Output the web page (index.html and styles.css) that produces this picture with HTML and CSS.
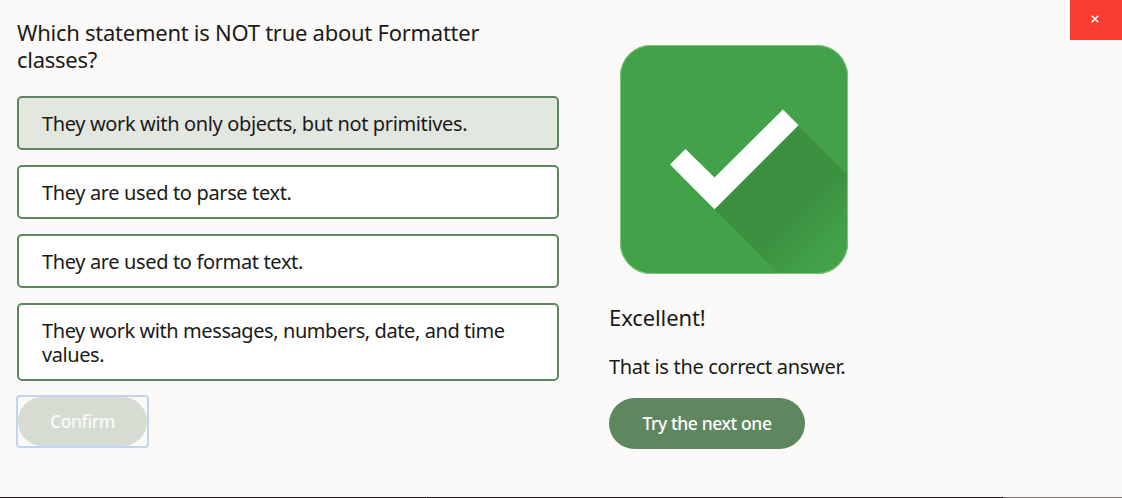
FILE: index.html
```html
<!DOCTYPE html>
<html lang="en">
<head>
<meta charset="utf-8">
<title>Quiz</title>
<link rel="stylesheet" href="styles.css">
</head>
<body>
<div class="dialog">
  <main class="quiz">
    <section class="question">
      <h1 class="prompt">Which statement is NOT true about Formatter<br>classes?</h1>
      <div class="options">
        <div class="option selected">They work with only objects, but not primitives.</div>
        <div class="option">They are used to parse text.</div>
        <div class="option">They are used to format text.</div>
        <div class="option long">They work with messages, numbers, date, and time<br>values.</div>
      </div>
      <div class="focus"><button class="button confirm" disabled>Confirm</button></div>
    </section>
    <section class="feedback">
      <svg class="badge" width="228" height="229" viewBox="0 0 228 229">
        <defs>
          <linearGradient id="shade" gradientUnits="userSpaceOnUse" x1="155" y1="155" x2="209" y2="209">
            <stop offset="0" stop-color="#3c9141"/>
            <stop offset="0.35" stop-color="#3c9141"/>
            <stop offset="1" stop-color="#43a249"/>
          </linearGradient>
          <clipPath id="tile"><rect width="228" height="229" rx="31"/></clipPath>
        </defs>
        <g clip-path="url(#tile)">
          <rect width="228" height="229" fill="#43a249"/>
          <path d="M178.500 80.500L328.500 230.500L244.500 314.500L94.500 164.500Z" fill="url(#shade)"/>
          <path d="M50 119.500L65.500 104L94.500 132.500L163 64.500L178.500 80.200L94.500 164.200Z" fill="#fff"/>
        </g>
        <rect x=".5" y=".5" width="227" height="228" rx="30.500" fill="none" stroke="#7cc680"/>
      </svg>
      <h2 class="result">Excellent!</h2>
      <p class="detail">That is the correct answer.</p>
      <button class="button next">Try the next one</button>
    </section>
    <button class="close" aria-label="Close">
      <svg width="8" height="8" viewBox="0 0 8 8"><path d="M.7.7L7.300 7.300M7.300.7L.7 7.300" stroke="#fff" stroke-width="1.500"/></svg>
    </button>
  </main>
  <footer class="edge"><i class="dark"></i><i class="tick"></i><i class="dark grow"></i><i class="light"></i></footer>
</div>
</body>
</html>
```
FILE: styles.css
```css
* { box-sizing: border-box; }
body { margin: 0; background: #fbfaf8; color: #1b1a18; font-family: "Noto Sans", sans-serif; }
h1, h2, p { margin: 0; font-weight: 400; }
.dialog { height: 498px; display: flex; flex-direction: column; overflow: hidden; }
.quiz { flex: 1; min-height: 0; display: flex; align-items: flex-start; }
.question { width: 542px; margin-left: 17px; padding-top: 19px; }
.prompt { font-size: 22px; line-height: 27px; letter-spacing: -0.26px; white-space: nowrap; }
.options { display: grid; gap: 15px; margin-top: 23px; }
.option { border: 2px solid #5f875f; border-radius: 5px; background: #fff; padding: 14px 23px 12px; font-size: 20px; line-height: 24px; letter-spacing: -0.36px; white-space: nowrap; }
.long { letter-spacing: -0.42px; }
.selected { background: #e2e7e0; }
.button { display: block; border: 0; font: 500 17.5px/24px "Noto Sans", sans-serif; color: #fff; white-space: nowrap; padding: 0 0 1px; letter-spacing: -0.4px; }
.focus { width: 133px; height: 53px; margin: 14px 0 0 -1px; border: 2px solid #bfd5f0; border-radius: 4px; }
.confirm { width: 129px; height: 49px; border-radius: 25px; background: #d6dcd2; color: #fafaf8; }
.feedback { margin-left: 50px; padding-top: 45px; display: flex; flex-direction: column; align-items: flex-start; }
.badge { display: block; margin-left: 11px; }
.result { margin-top: 29px; font-size: 22px; line-height: 28px; letter-spacing: -0.1px; }
.detail { margin-top: 24px; font-size: 20px; line-height: 24px; letter-spacing: -0.32px; white-space: nowrap; }
.next { width: 196px; height: 51px; margin-top: 19px; border-radius: 26px; background: #5f875f; }
.close { margin-left: auto; width: 52px; height: 40px; border: 0; padding: 0 2px 3px 0; background: #fa3b32; display: grid; place-items: center; }
.edge { display: flex; height: 1px; }
.dark { width: 426px; background: #201d1c; }
.grow { flex: 1; }
.tick { width: 1px; background: #777; }
.light { width: 119px; background: #77726f; }
```
